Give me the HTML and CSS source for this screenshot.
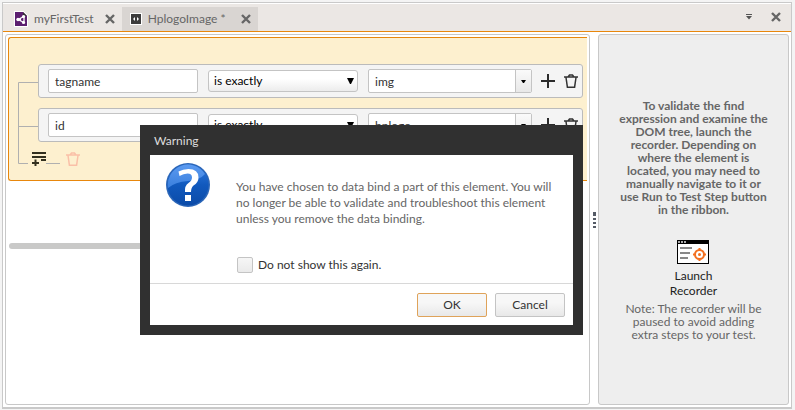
FILE: index.html
```html
<!DOCTYPE html>
<html lang="en">
<head>
<meta charset="utf-8">
<title>HplogoImage</title>
<link rel="stylesheet" href="styles.css">
</head>
<body>
<svg class="defs" aria-hidden="true">
  <symbol id="close" viewBox="0 0 10 10"><path d="M1 1l8 8M9 1l-8 8" stroke="#666" stroke-width="2.4" fill="none"/></symbol>
  <symbol id="plus" viewBox="0 0 14 14"><path d="M7 0v14M0 7h14" stroke="#2b2b2b" stroke-width="2" fill="none"/></symbol>
  <symbol id="trash" viewBox="0 0 14 14"><path d="M0 3h14M2 3.5l1.4 9.7h7.2L12 3.5M4 3l1.5-2h3L10 3" stroke="currentColor" stroke-width="1.5" fill="none"/></symbol>
  <symbol id="down" viewBox="0 0 7 6"><path d="M0 0h7L4 6H3z"/></symbol>
  <symbol id="down-small" viewBox="0 0 5 3"><path d="M0 0h5L3 3H2z"/></symbol>
</svg>
<div class="window">
  <nav class="tabs">
    <div class="tab">
      <svg width="14" height="16" viewBox="0 0 14 16"><path d="M0 0h9.500L14 4.500V16H0z" fill="#fff"/><path d="M1 1h8l4 4v10H1z" fill="#5c1f70"/><path d="M9 1l4 4H9z" fill="#333"/><path d="M4 8.500l6-3v6zM4 8.500h3" stroke="#fff" stroke-width="1.300" fill="none"/><circle cx="4" cy="8.500" r="1.700" fill="#fff"/><circle cx="9.500" cy="5.500" r="1.600" fill="#fff"/><circle cx="9.500" cy="11.500" r="1.600" fill="#fff"/></svg>
      <a href="#first">myFirstTest</a>
      <button class="bare" aria-label="Close myFirstTest"><svg width="10" height="10"><use href="#close"/></svg></button>
    </div>
    <div class="tab active">
      <svg width="12" height="12" viewBox="0 0 12 12"><path d="M0 0h12v12H0z" fill="#fff"/><path d="M1 1h10v10H1z" fill="#3c3c3c"/><path d="M5 4v4L3 6zM7 4v4l2-2z" fill="#fff"/></svg>
      <a href="#logo">HplogoImage *</a>
      <button class="bare" aria-label="Close HplogoImage"><svg width="10" height="10"><use href="#close"/></svg></button>
    </div>
    <div class="tab-tools">
      <button class="bare" aria-label="Tab list"><svg width="6" height="6" viewBox="0 0 6 6"><path d="M0 0h6v1H0zM0 2h6L3 5.500z" fill="#555"/></svg></button>
      <button class="bare" aria-label="Close pane"><svg width="10" height="10"><use href="#close"/></svg></button>
    </div>
  </nav>
  <main class="panes">
    <section class="editor">
      <div class="group">
        <div class="rule">
          <input class="field" aria-label="Attribute" value="tagname">
          <div class="select"><select aria-label="Comparison"><option>is exactly</option></select><svg width="7" height="6"><use href="#down"/></svg></div>
          <div class="combo"><input aria-label="Value" value="img"><button aria-label="Show values"><svg width="5" height="3"><use href="#down-small"/></svg></button></div>
          <button class="bare" aria-label="Add"><svg width="14" height="14"><use href="#plus"/></svg></button>
          <button class="bare" aria-label="Delete"><svg width="14" height="14"><use href="#trash"/></svg></button>
        </div>
        <div class="rule">
          <input class="field" aria-label="Attribute" value="id">
          <div class="select"><select aria-label="Comparison"><option>is exactly</option></select><svg width="7" height="6"><use href="#down"/></svg></div>
          <div class="combo"><input aria-label="Value" value="hplogo"><button aria-label="Show values"><svg width="5" height="3"><use href="#down-small"/></svg></button></div>
          <button class="bare" aria-label="Add"><svg width="14" height="14"><use href="#plus"/></svg></button>
          <button class="bare" aria-label="Delete"><svg width="14" height="14"><use href="#trash"/></svg></button>
        </div>
        <div class="group-tools">
          <button class="bare" aria-label="Add group"><svg width="14" height="14" viewBox="0 0 14 14"><path d="M0 0h14v2H0zM0 4h14v2H0zM9 7h5v2H9zM0 10h7v2H0zM2.500 7.500h2v6.500h-2z" fill="#33301f"/></svg></button>
          <span class="dash"></span>
          <button class="bare faded" aria-label="Delete group"><svg width="14" height="14"><use href="#trash"/></svg></button>
        </div>
        <svg class="tree" width="20" height="82" viewBox="0 0 20 82"><path d="M20 .5H.5v81H10M0 44.500h20" stroke="#b0b0b0" fill="none"/></svg>
      </div>
      <div class="scrollbar"></div>
    </section>
    <div class="splitter"><svg width="3" height="16" viewBox="0 0 3 16"><path d="M0 0h3v4H0zM0 6h3v2H0zM0 10h3v2H0zM0 14h3v2H0z" fill="#555b66"/></svg></div>
    <aside class="recorder">
      <p class="hint">To validate the find<br>expression and examine the<br>DOM tree, launch the<br>recorder. Depending on<br>where the element is<br>located, you may need to<br>manually navigate to it or<br>use Run to Test Step button<br>in the ribbon.</p>
      <button class="launch">
        <svg width="32" height="24" viewBox="0 0 32 24"><path d="M0 0h32v24H0z"/><path d="M1 4h30v19H1z" fill="#fff"/><path d="M1 1h2v2H1zM4 1h2v2H4zM7 1h2v2H7z" fill="#aaa"/><path d="M3 7h12v2H3zM3 12h10v2H3zM3 17h8v2H3z" fill="#888"/><g stroke="#f37021" fill="none" stroke-width="2"><circle cx="22.500" cy="14.500" r="4.500"/><path d="M22.500 8v3M22.500 18v3M16 14.500h3M26 14.500h3"/></g><circle cx="22.500" cy="14.500" r="1.500" fill="#f37021"/></svg>
        Launch<br>Recorder
      </button>
      <p class="note">Note: The recorder will be<br>paused to avoid adding<br>extra steps to your test.</p>
    </aside>
  </main>
</div>
<div class="dialog" role="dialog" aria-labelledby="dialog-title">
  <h1 id="dialog-title">Warning</h1>
  <div class="dialog-body">
    <div class="message">
      <svg width="44" height="44" viewBox="0 0 44 44">
        <defs>
          <linearGradient id="ball" x1="0" y1="0" x2="0" y2="1"><stop offset="0" stop-color="#2f7ae0"/><stop offset=".5" stop-color="#1159bd"/><stop offset="1" stop-color="#0b4ba8"/></linearGradient>
          <linearGradient id="shine" x1="0" y1="0" x2="0" y2="1"><stop offset="0" stop-color="#5b9af0"/><stop offset="1" stop-color="#3a7fdd"/></linearGradient>
        </defs>
        <circle cx="22" cy="22" r="22" fill="#2b66b8"/><circle cx="22" cy="22" r="20.500" fill="url(#ball)"/>
        <path d="M2 25A20.200 20.200 0 0 1 39 11Q34 17 22 18 9 19 2 25z" fill="url(#shine)"/>
        <path d="M12.500 8.500Q17 6 22.500 6 32.500 6 32.500 14.500 32.500 19.500 27.500 22.500 25 24.500 25 29H19Q18.500 22.500 22.500 20 26 17.800 26 14.500 26 10.500 21.500 10.500 17.500 10.500 13.500 13zM19 32h6v6H19z" fill="#fff"/>
      </svg>
      <div>
        <p>You have chosen to data bind a part of this element. You will<br>no longer be able to validate and troubleshoot this element<br>unless you remove the data binding.</p>
        <label><input type="checkbox">Do not show this again.</label>
      </div>
    </div>
    <div class="actions"><button class="primary">OK</button><button>Cancel</button></div>
  </div>
</div>
</body>
</html>
```
FILE: styles.css
```css
* { box-sizing: border-box; }
html, body { height: 100%; }
body {
  margin: 0;
  padding: 2px 3px 1px 2px;
  background: #f4f4f4;
  color: #333;
  font: 12px/16px Lato, sans-serif;
}
.defs { position: absolute; width: 0; height: 0; }
svg { display: block; flex-shrink: 0; }
p, h1 { margin: 0; }
button, input, select { font: inherit; color: inherit; margin: 0; }
button { display: flex; align-items: center; justify-content: center; padding: 0; }
.bare { border: 0; background: none; }
.window {
  height: 100%;
  display: flex;
  flex-direction: column;
  border: 1px solid #c9c9c9;
  border-bottom-width: 2px;
  background: #fff;
  padding-top: 1px;
}
.tabs {
  display: flex;
  align-items: flex-end;
  height: 28px;
  background: #ebe7e4;
  border-bottom: 1px solid #e8870c;
  color: #666;
}
.tab { display: flex; align-items: center; height: 24px; padding: 0 7px 0 11px; }
.tab a { color: inherit; text-decoration: none; margin: 0 11px 0 6px; }
.tab.active { background: #d9d5d2; padding-left: 8px; }
.tab.active a { margin-right: 15px; }
.tab-tools { display: flex; align-items: center; gap: 19px; height: 28px; margin-left: auto; padding-right: 10px; }
.panes { flex: 1; min-height: 0; display: flex; padding: 2px; }
.editor {
  flex: 1;
  min-width: 0;
  overflow: hidden;
  border: 1px solid #c8c8c8;
  border-radius: 3px;
  padding: 2px;
}
.group {
  position: relative;
  display: flex;
  flex-direction: column;
  gap: 10px;
  padding: 26px 4px 14px 29px;
  border: 1px solid #e8870c;
  border-right: 0;
  border-radius: 3px 0 0 3px;
  background: #fdf0cf;
}
.rule {
  display: flex;
  align-items: center;
  height: 34px;
  padding: 0 4px 0 9px;
  border: 1px solid #bbb;
  border-radius: 3px;
  background: #f4f4f4;
}
.field, .combo { height: 24px; border: 1px solid #c4c4c4; border-radius: 2px; background: #fff; }
.field { width: 150px; padding: 1px 6px 0; }
.select { position: relative; width: 150px; margin: 0 10px; color: #000; }
.select select {
  display: block;
  appearance: none;
  width: 100%;
  height: 22px;
  padding: 0 5px;
  border: 1px solid #c4c4c4;
  border-radius: 3px;
  background: linear-gradient(#fff 40%, #ececec);
}
.select svg { position: absolute; right: 4px; top: 8px; }
.combo { flex: 1; min-width: 0; display: flex; margin-right: 9px; }
.combo input { flex: 1; min-width: 0; padding: 1px 6px 0; border: 0; background: none; }
.combo button { width: 16px; border: 0; border-left: 1px solid #c4c4c4; background: linear-gradient(#fafafa, #e8e8e8); }
.rule .bare + .bare { margin-left: 9px; color: #333; }
.group-tools { display: flex; align-items: center; height: 14px; margin-left: -6px; }
.dash { width: 14px; height: 1px; margin: 8px 6px 0 0; background: #b0b0b0; }
.faded { color: #fac0a8; }
.tree { position: absolute; left: 9px; top: 44px; }
.scrollbar { height: 6px; margin: 62px 200px 0 1px; border-radius: 3px; background: #c9c9c8; }
.splitter { width: 8px; display: flex; align-items: center; justify-content: center; }
.recorder {
  width: 191px;
  flex-shrink: 0;
  display: flex;
  flex-direction: column;
  align-items: center;
  border: 1px solid #c8c8c8;
  border-radius: 3px;
  background: #eee;
  color: #666;
  text-align: center;
  white-space: nowrap;
  line-height: 13px;
  padding-top: 64px;
}
.hint { font-weight: 700; }
.launch { display: block; border: 0; background: none; margin: 24px 0 4px; line-height: 15px; color: #222; }
.launch svg { margin: 0 auto 4px; }
.dialog {
  position: absolute;
  left: 140px;
  top: 125px;
  width: 443px;
  padding: 0 10px 10px;
  background: #303030;
}
.dialog h1 { padding: 8px 4px 6px; font-size: 12px; font-weight: 400; line-height: 16px; color: #ddd; }
.dialog-body { background: #fff; white-space: nowrap; }
.message { display: flex; gap: 26px; padding: 8px 16px 10px; color: #666; }
.message p { padding-top: 16px; }
.message label { display: flex; align-items: center; gap: 5px; margin: 30px 0 0 1px; color: #333; }
.message input {
  appearance: none;
  width: 16px;
  height: 16px;
  border: 1px solid #c4c4c4;
  border-radius: 2px;
  background: linear-gradient(#f6f6f6, #eaeaea);
}
.actions { display: flex; justify-content: flex-end; gap: 8px; padding: 9px 8px 8px; border-top: 1px solid #d8d8d8; }
.actions button { width: 70px; height: 24px; border: 1px solid #c4c4c4; border-radius: 2px; background: linear-gradient(#f7f7f7 40%, #e8e8e8); }
.actions .primary { border-color: #dfa35a; }
```
